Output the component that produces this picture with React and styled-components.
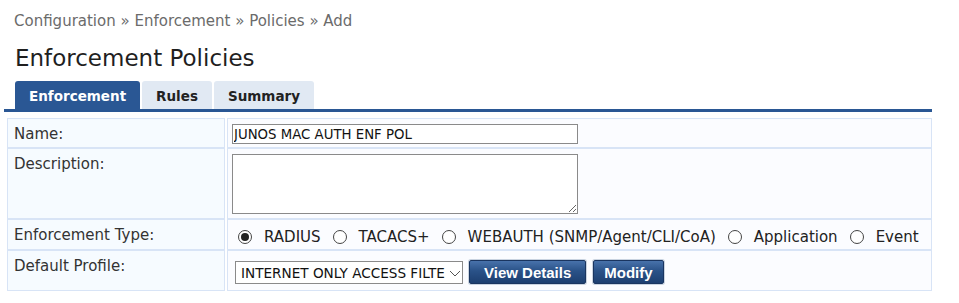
import React from "react";
import styled, { createGlobalStyle } from "styled-components";

const GlobalStyle = createGlobalStyle`
  body {
    margin: 0;
    background: #ffffff;
    font-family: "DejaVu Sans", Verdana, sans-serif;
  }
`;

const Page = styled.div`
  padding: 12px 27px 0 4px;
`;

const Breadcrumb = styled.div`
  margin-left: 10px;
  font-size: 15px;
  line-height: 18px;
  color: #6b6b6b;
`;

const Title = styled.h1`
  margin: 14px 0 0 11px;
  font-size: 23px;
  line-height: 28px;
  font-weight: normal;
  color: #1f1f1f;
`;

const TabBar = styled.div`
  display: flex;
  gap: 2px;
  margin-top: 9px;
  padding-left: 11px;
  border-bottom: 3px solid #2a5794;
`;

const Tab = styled.div`
  height: 28px;
  padding: 1px ${(p) => p.$pad}px 0;
  box-sizing: border-box;
  display: flex;
  align-items: center;
  font-size: 13.5px;
  font-weight: bold;
  border-radius: 3px 3px 0 0;
  background: ${(p) => (p.$active ? "#2a5794" : "#e1e9f3")};
  color: ${(p) => (p.$active ? "#ffffff" : "#222222")};
`;

const Form = styled.div`
  margin: 6px 0 0 3px;
  display: grid;
  grid-template-columns: 218px 1fr;
  column-gap: 2px;
`;

const Cell = styled.div`
  height: ${(p) => p.$h}px;
  box-sizing: border-box;
  border: 1px solid #d8e4f6;
  background: ${(p) => (p.$label ? "#f6fbff" : "#fbfcff")};
  padding: ${(p) => (p.$label ? "6px 0 0 6px" : "5px 0 0 4px")};
  font-size: 15px;
  color: #333333;
  display: ${(p) => (p.$label ? "block" : "flex")};
  align-items: ${(p) => p.$align || "flex-start"};
`;

const TextInput = styled.input`
  width: 346px;
  height: 20px;
  box-sizing: border-box;
  border: 1px solid #8a8a8a;
  padding: 0 0 0 1px;
  font-family: "DejaVu Sans", Verdana, sans-serif;
  font-size: 13.3px;
  color: #111;
  background: #fff;
  outline: none;
`;

const TextArea = styled.textarea`
  width: 346px;
  height: 60px;
  box-sizing: border-box;
  border: 1px solid #8a8a8a;
  margin: 0;
  background: #fff;
  outline: none;
  resize: both;
`;

const RadioGroup = styled.div`
  display: flex;
  align-items: center;
  padding-left: 6px;
  white-space: nowrap;
  font-size: 15px;
  color: #222222;
`;

const RadioItem = styled.label`
  display: flex;
  align-items: center;
  margin-right: 12px;
`;

const RadioDot = styled.span`
  width: 12px;
  height: 12px;
  border: 1px solid #444;
  border-radius: 50%;
  margin-right: 12px;
  display: flex;
  align-items: center;
  justify-content: center;
  background: #fff;
  &::after {
    content: "";
    width: 8px;
    height: 8px;
    border-radius: 50%;
    background: ${(p) => (p.$checked ? "#222" : "transparent")};
  }
`;

const Select = styled.div`
  width: 228px;
  height: 23px;
  box-sizing: border-box;
  border: 1px solid #8a8a8a;
  background: #fff;
  display: flex;
  align-items: center;
  padding-left: 5px;
  margin: 5px 0 0 3px;
  font-size: 13.6px;
  color: #111;
  white-space: nowrap;
`;

const SelectText = styled.span`
  flex: 1;
`;

const Button = styled.button`
  height: 24px;
  margin: 4px 0 0 ${(p) => p.$ml}px;
  padding: 0 ${(p) => p.$pad}px;
  border: 1px solid #1a3560;
  border-radius: 2px;
  background: linear-gradient(#4872ab, #2a5288 45%, #1d3f70);
  color: #fff;
  font-family: "Liberation Sans", Arial, sans-serif;
  font-size: 15px;
  font-weight: bold;
  box-shadow: 0 0 0 1px #c9d3e0;
`;

function Chevron() {
  return (
    <svg width="14" height="10" viewBox="0 0 14 10">
      <path d="M2 3 L7 8 L12 3" fill="none" stroke="#555" strokeWidth="1" />
    </svg>
  );
}

const types = ["RADIUS", "TACACS+", "WEBAUTH (SNMP/Agent/CLI/CoA)", "Application", "Event"];

export default function App() {
  return (
    <Page>
      <GlobalStyle />
      <Breadcrumb>Configuration » Enforcement » Policies » Add</Breadcrumb>
      <Title>Enforcement Policies</Title>
      <TabBar>
        <Tab $active $pad={14}>Enforcement</Tab>
        <Tab $pad={14}>Rules</Tab>
        <Tab $pad={14}>Summary</Tab>
      </TabBar>
      <Form>
        <Cell $label $h={30}>Name:</Cell>
        <Cell $h={30}>
          <TextInput readOnly value="JUNOS MAC AUTH ENF POL" />
        </Cell>
        <Cell $label $h={71}>Description:</Cell>
        <Cell $h={71}>
          <TextArea />
        </Cell>
        <Cell $label $h={31}>Enforcement Type:</Cell>
        <Cell $h={31} $align="center">
          <RadioGroup>
            {types.map((t, i) => (
              <RadioItem key={t}>
                <RadioDot $checked={i === 0} />
                {t}
              </RadioItem>
            ))}
          </RadioGroup>
        </Cell>
        <Cell $label $h={41}>Default Profile:</Cell>
        <Cell $h={41}>
          <Select>
            <SelectText>INTERNET ONLY ACCESS FILTE</SelectText>
            <Chevron />
          </Select>
          <Button $ml={6} $pad={14}>View Details</Button>
          <Button $ml={7} $pad={10}>Modify</Button>
        </Cell>
      </Form>
    </Page>
  );
}
